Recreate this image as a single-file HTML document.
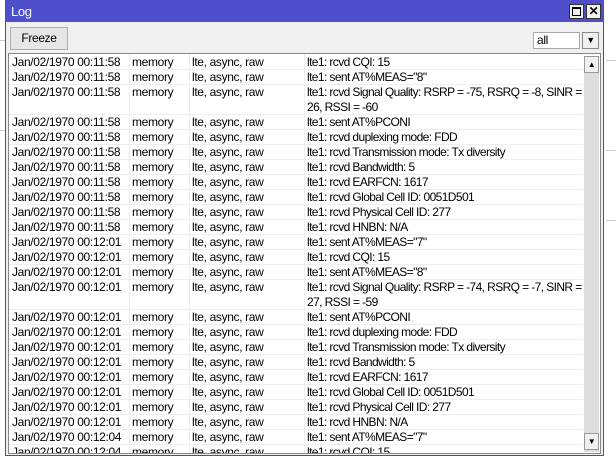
<!DOCTYPE html><html><head><style>
body{margin:0;width:616px;height:459px;overflow:hidden;background:#fff;font-family:"Liberation Sans",sans-serif;font-size:12px;letter-spacing:-0.35px;position:relative}
.a{position:absolute}
#win{left:5px;top:0;width:599px;height:456px;background:#f0f0f0;border:1px solid #555;border-top:none;box-sizing:border-box}
#title{left:6px;top:0;width:598px;height:22px;background:#4f4fcb;color:#fff;font-size:13px}
.row{position:absolute;left:0;height:15px;border-bottom:1px solid #eee;width:574px;box-sizing:border-box}
.row span{position:absolute;top:0;line-height:15px;white-space:nowrap}
.c1{left:3px}.c2{left:123px}.c3{left:183px}.c4{left:298px;letter-spacing:-0.6px}
.vl{position:absolute;top:0;bottom:0;width:1px;background:#eee}
</style></head><body>
<div class="a" style="left:0;top:40px;width:5px;height:1px;background:#ccc"></div>
<div class="a" style="left:0;top:130px;width:5px;height:1px;background:#ccc"></div>
<div class="a" style="left:606px;top:60px;width:10px;height:1px;background:#ccc"></div>
<div class="a" style="left:606px;top:150px;width:10px;height:1px;background:#ccc"></div>
<div class="a" style="left:606px;top:220px;width:10px;height:1px;background:#ccc"></div>
<div class="a" id="win"></div>
<div class="a" id="title"><span class="a" style="left:5px;top:4px">Log</span>
<div class="a" style="left:563px;top:4px;width:15px;height:15px;background:#f0f0f0;border:1px solid #333;box-sizing:border-box"><div class="a" style="left:2px;top:2px;width:9px;height:9px;border:1px solid #000;border-top-width:2px;box-sizing:border-box"></div></div>
<div class="a" style="left:580px;top:4px;width:15px;height:15px;background:#f0f0f0;border:1px solid #333;box-sizing:border-box;color:#000;font-size:12px;font-weight:bold;text-align:center;line-height:13px">✕</div>
</div>
<div class="a" style="left:10px;top:27px;width:58px;height:23px;background:#e6e6e6;border:1px solid #adadad;box-sizing:border-box;text-align:center;line-height:21px">Freeze</div>
<div class="a" style="left:533px;top:32px;width:47px;height:17px;background:#fff;border:1px solid #aaa;box-sizing:border-box;line-height:15px;padding-left:3px">all</div>
<div class="a" style="left:582px;top:32px;width:17px;height:17px;background:#f0f0f0;border:1px solid #888;box-sizing:border-box;font-size:9px;text-align:center;line-height:15px">▼</div>
<div class="a" style="left:8px;top:53px;width:593px;height:401px;background:#fff;border:1px solid #888;box-sizing:border-box;overflow:hidden">
<div class="vl" style="left:120px"></div><div class="vl" style="left:180px"></div><div class="vl" style="left:295px"></div>
<div id="rows"></div>
<div class="a" style="left:575px;top:2px;width:15px;height:396px;background:#ddd"></div>
<div class="a" style="left:575px;top:2px;width:15px;height:17px;background:#f0f0f0;border:1px solid #999;box-sizing:border-box;font-size:8px;text-align:center;line-height:15px">▲</div>
<div class="a" style="left:575px;top:379px;width:15px;height:17px;background:#f0f0f0;border:1px solid #999;box-sizing:border-box;font-size:8px;text-align:center;line-height:15px">▼</div>
</div>
<script>
var d=[["00:11:58","lte1: rcvd CQI: 15"],["00:11:58","lte1: sent AT%MEAS=\"8\""],["00:11:58","lte1: rcvd Signal Quality: RSRP = -75, RSRQ = -8, SINR =<br>26, RSSI = -60",2],["00:11:58","lte1: sent AT%PCONI"],["00:11:58","lte1: rcvd duplexing mode: FDD"],["00:11:58","lte1: rcvd Transmission mode: Tx diversity"],["00:11:58","lte1: rcvd Bandwidth: 5"],["00:11:58","lte1: rcvd EARFCN: 1617"],["00:11:58","lte1: rcvd Global Cell ID: 0051D501"],["00:11:58","lte1: rcvd Physical Cell ID: 277"],["00:11:58","lte1: rcvd HNBN: N/A"],["00:12:01","lte1: sent AT%MEAS=\"7\""],["00:12:01","lte1: rcvd CQI: 15"],["00:12:01","lte1: sent AT%MEAS=\"8\""],["00:12:01","lte1: rcvd Signal Quality: RSRP = -74, RSRQ = -7, SINR =<br>27, RSSI = -59",2],["00:12:01","lte1: sent AT%PCONI"],["00:12:01","lte1: rcvd duplexing mode: FDD"],["00:12:01","lte1: rcvd Transmission mode: Tx diversity"],["00:12:01","lte1: rcvd Bandwidth: 5"],["00:12:01","lte1: rcvd EARFCN: 1617"],["00:12:01","lte1: rcvd Global Cell ID: 0051D501"],["00:12:01","lte1: rcvd Physical Cell ID: 277"],["00:12:01","lte1: rcvd HNBN: N/A"],["00:12:04","lte1: sent AT%MEAS=\"7\""],["00:12:04","lte1: rcvd CQI: 15"]];
var h="",y=1;d.forEach(function(r){var n=r[2]||1;h+='<div class="row" style="top:'+y+'px;height:'+(15*n)+'px"><span class="c1">Jan/02/1970 '+r[0]+'</span><span class="c2">memory</span><span class="c3">lte, async, raw</span><span class="c4">'+r[1]+'</span></div>';y+=15*n;});
document.getElementById("rows").innerHTML=h;
</script>
</body></html>
